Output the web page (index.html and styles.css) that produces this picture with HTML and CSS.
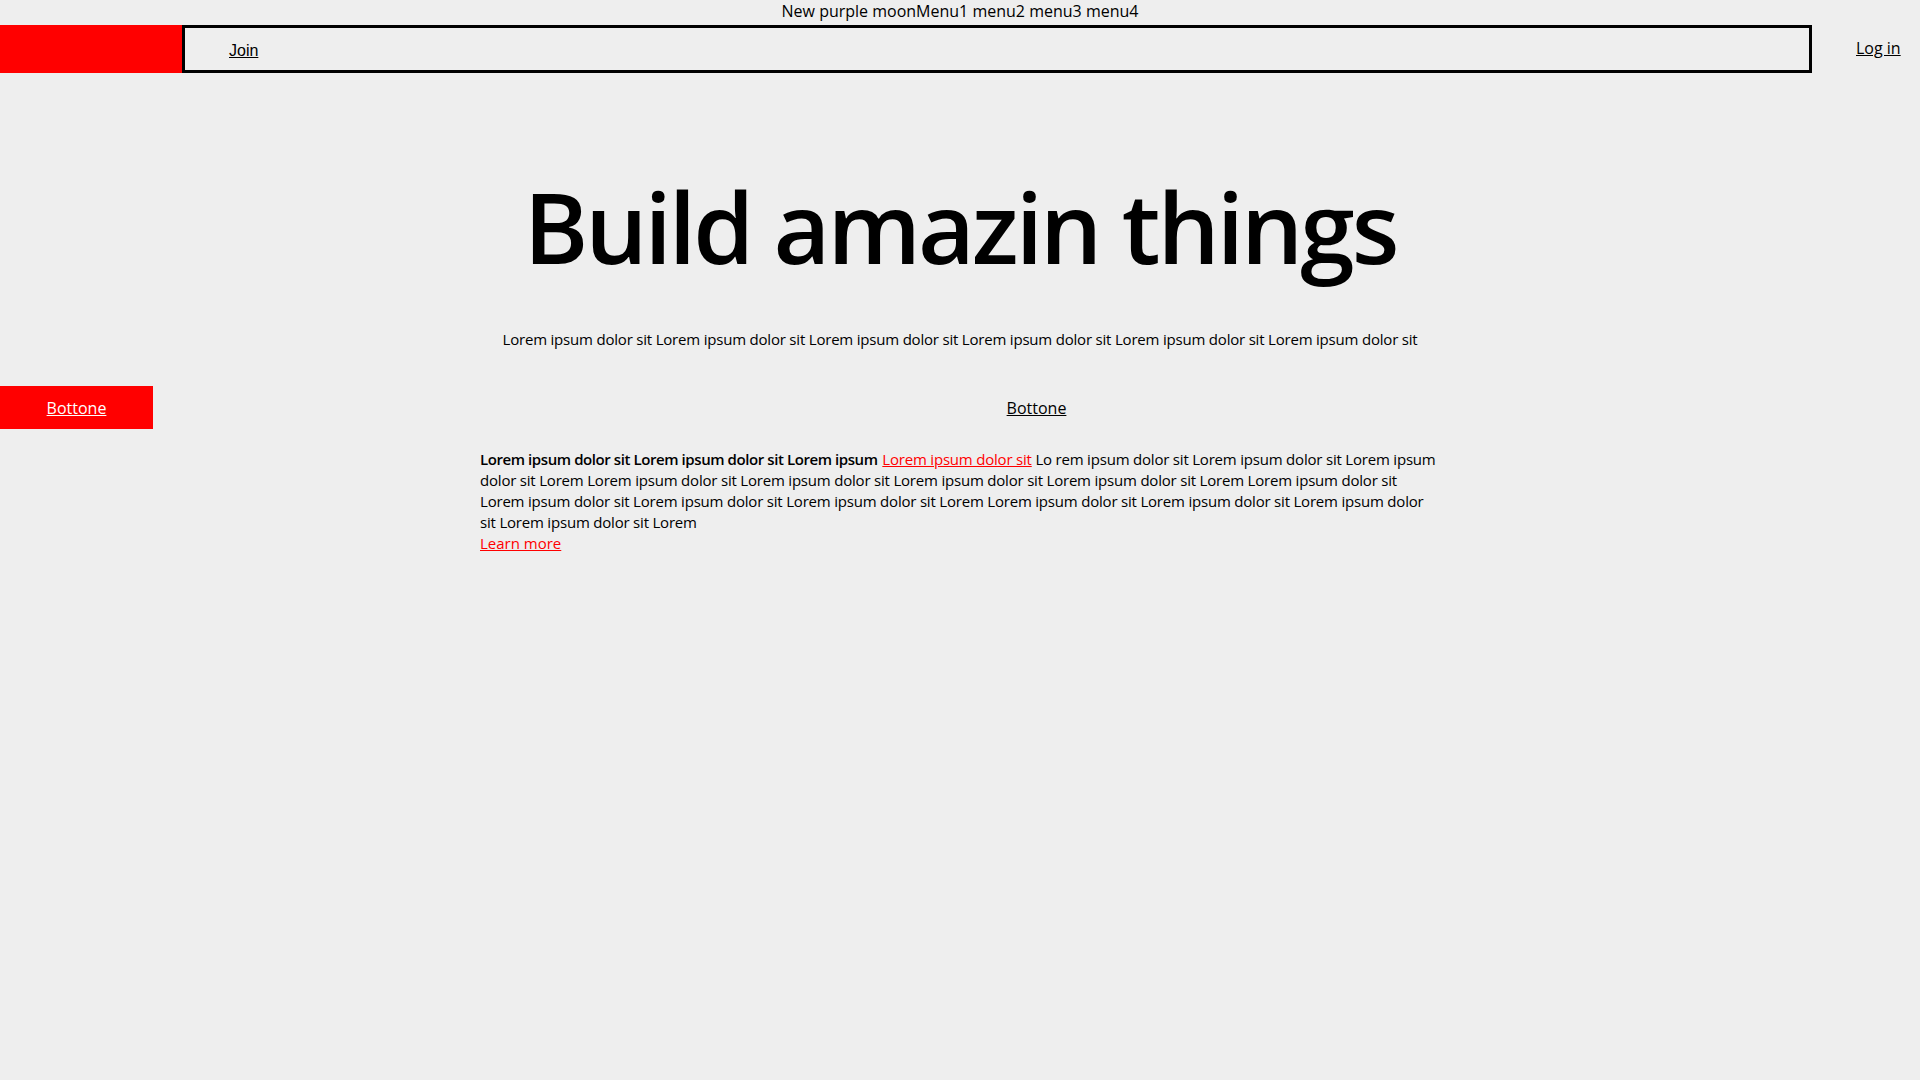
FILE: index.html
```html
<!DOCTYPE html>
<html lang="en">
<head>
<meta charset="utf-8">
<title>New purple moon</title>
<link rel="stylesheet" href="styles.css">
</head>
<body>
<div class="topbar">New purple moonMenu1 menu2 menu3 menu4</div>
<nav class="nav">
  <div class="logo"></div>
  <div class="navbox"><a class="join" href="#">Join</a></div>
  <div class="login"><a href="#">Log in</a></div>
</nav>
<section class="hero">
  <h1 class="title">Build amazin things</h1>
  <p class="sub">Lorem ipsum dolor sit Lorem ipsum dolor sit Lorem ipsum dolor sit Lorem ipsum dolor sit Lorem ipsum dolor sit Lorem ipsum dolor sit</p>
</section>
<div class="actions">
  <a class="btn-red" href="#">Bottone</a>
  <div class="center-link"><a href="#">Bottone</a></div>
</div>
<div class="content">
  <p class="para"><b>Lorem ipsum dolor sit Lorem ipsum dolor sit Lorem ipsum</b> <a class="red-link" href="#">Lorem ipsum dolor sit</a> Lo rem ipsum dolor sit Lorem ipsum dolor sit Lorem ipsum dolor sit Lorem Lorem ipsum dolor sit Lorem ipsum dolor sit Lorem ipsum dolor sit Lorem ipsum dolor sit Lorem Lorem ipsum dolor sit Lorem ipsum dolor sit Lorem ipsum dolor sit Lorem ipsum dolor sit Lorem Lorem ipsum dolor sit Lorem ipsum dolor sit Lorem ipsum dolor sit Lorem ipsum dolor sit Lorem</p>
  <a class="red-link" href="#">Learn more</a>
</div>
</body>
</html>
```
FILE: styles.css
```css
html, body {
  margin: 0;
  padding: 0;
}
body {
  background: #eeeeee;
  color: #000;
  font-family: "Open Sans", "DejaVu Sans", sans-serif;
}
a { color: inherit; }
.topbar {
  height: 25px;
  line-height: 22px;
  font-size: 16px;
  text-align: center;
}
.nav {
  display: flex;
  height: 48px;
}
.logo {
  width: 182px;
  background: #ff0000;
}
.navbox {
  flex: 1;
  border: 3px solid #000;
  display: flex;
  align-items: center;
  padding-left: 44px;
  padding-top: 4px;
}
.join {
  font-family: "Liberation Sans", Arial, sans-serif;
  font-size: 16px;
  color: #000;
}
.login {
  width: 108px;
  box-sizing: border-box;
  display: flex;
  align-items: center;
  padding-left: 44px;
  font-size: 16px;
  padding-bottom: 3px;
}
.hero {
  text-align: center;
}
.title {
  margin: 0;
  padding-top: 78px;
  font-size: 98px;
  font-weight: 600;
  letter-spacing: -3px;
  line-height: 150px;
}
.sub {
  margin: 28px 0 0;
  font-size: 15px;
  line-height: 20px;
  letter-spacing: -0.2px;
}
.actions {
  display: flex;
  align-items: center;
  margin-top: 37px;
  height: 43px;
}
.btn-red {
  width: 153px;
  height: 43px;
  background: #ff0000;
  color: #fff;
  display: flex;
  align-items: center;
  justify-content: center;
  font-size: 16px;
}
.center-link {
  flex: 1;
  text-align: center;
  font-size: 16px;
}
.content {
  max-width: 960px;
  margin: 20px auto 0;
  font-size: 15px;
  line-height: 21px;
}
.para {
  margin: 0;
  letter-spacing: -0.2px;
}
.para b {
  font-weight: 600;
  letter-spacing: -0.42px;
  margin-right: 1px;
}
.red-link {
  color: #ff0000;
}
```
